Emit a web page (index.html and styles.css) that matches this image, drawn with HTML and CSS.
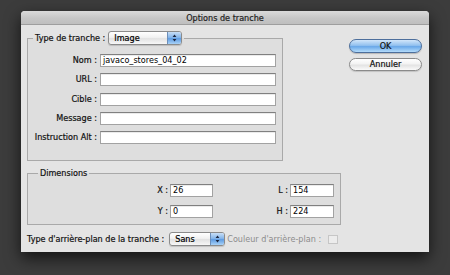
FILE: index.html
```html
<!DOCTYPE html>
<html lang="fr">
<head>
<meta charset="utf-8">
<title>Options de tranche</title>
<link rel="stylesheet" href="styles.css">
</head>
<body>
<div class="dialog">
  <div class="titlebar">Options de tranche</div>
  <div class="content">
    <div class="main">
      <fieldset class="group group-slice">
        <legend class="legend legend-slice">
          <span class="legend-text">Type de tranche :</span>
          <span class="popup popup-image">
            <span class="popup-value">Image</span>
            <span class="popup-arrows"><svg width="13" height="12" viewBox="0 0 13 12"><path d="M4.6 5 L6.5 2.6 L8.4 5 Z M4.6 7 L6.5 9.4 L8.4 7 Z" fill="#1c2740"/></svg></span>
          </span>
        </legend>
        <div class="fields">
          <span class="label">Nom :</span><div class="input">javaco_stores_04_02</div>
          <span class="label">URL :</span><div class="input"></div>
          <span class="label">Cible :</span><div class="input"></div>
          <span class="label">Message :</span><div class="input"></div>
          <span class="label">Instruction Alt :</span><div class="input"></div>
        </div>
      </fieldset>
      <fieldset class="group group-dim">
        <legend class="legend legend-dim">Dimensions</legend>
        <div class="dims">
          <span class="label dim-label">X :</span><div class="input">26</div>
          <span class="label dim-label">L :</span><div class="input">154</div>
          <span class="label dim-label">Y :</span><div class="input">0</div>
          <span class="label dim-label">H :</span><div class="input">224</div>
        </div>
      </fieldset>
      <div class="bgrow">
        <span class="bg-label">Type d'arrière-plan de la tranche :</span>
        <span class="popup popup-sans">
          <span class="popup-value">Sans</span>
          <span class="popup-arrows"><svg width="13" height="12" viewBox="0 0 13 12"><path d="M4.6 5 L6.5 2.6 L8.4 5 Z M4.6 7 L6.5 9.4 L8.4 7 Z" fill="#1c2740"/></svg></span>
        </span>
        <span class="color-label">Couleur d'arrière-plan :</span>
        <span class="swatch"></span>
      </div>
    </div>
    <div class="buttons">
      <div class="btn btn-ok">OK</div>
      <div class="btn btn-cancel">Annuler</div>
    </div>
  </div>
</div>
</body>
</html>
```

FILE: styles.css
```css
html, body {
  margin: 0;
  padding: 0;
}
body {
  width: 450px;
  height: 275px;
  background: #3c3c3c;
  padding: 11px 0 0 21px;
  box-sizing: border-box;
  font-family: "DejaVu Sans", "Noto Sans", sans-serif;
  font-size: 8.1px;
  color: #111;
  overflow: hidden;
}
.dialog {
  width: 408px;
  height: 241px;
  background: #e4e4e4;
  border-radius: 4px 4px 0 0;
  box-shadow: 0 6px 16px rgba(0,0,0,0.7);
  overflow: hidden;
  -webkit-text-stroke: 0.2px currentColor;
}
.titlebar {
  height: 14px;
  line-height: 14px;
  text-align: center;
  color: #1e1e1e;
  background: linear-gradient(#dadada, #c6c6c6 55%, #bfbfbf);
  border-bottom: 1px solid #9e9e9e;
  box-sizing: border-box;
}
.content {
  display: flex;
  padding: 6px 0 0 6px;
}
.main {
  width: 314px;
  display: flex;
  flex-direction: column;
  align-items: flex-start;
}
.group {
  margin: 0;
  border: 1px solid #a9a9a9;
  background: rgba(0,0,0,0.025);
  box-sizing: border-box;
  min-width: 0;
}
.group-slice {
  width: 256px;
  padding: 0 5px 16px 5px;
}
.group-dim {
  width: 314px;
  margin-top: 7px;
  padding: 0 6px 6px 10px;
}
.legend {
  padding: 0 2px;
}
.legend-slice {
  display: flex;
  align-items: center;
  height: 14px;
}
.legend-dim {
  line-height: 10px;
  height: 10px;
}
.fields {
  margin-top: 9px;
  display: grid;
  grid-template-columns: 64px 176px;
  grid-auto-rows: 13px;
  column-gap: 3px;
  row-gap: 6.25px;
}
.label {
  text-align: right;
  line-height: 13px;
  white-space: nowrap;
}
.input {
  height: 13px;
  box-sizing: border-box;
  background: #fff;
  border: 1px solid #a2a2a2;
  border-top-color: #808080;
  box-shadow: inset 0 1px 0 rgba(0,0,0,0.08);
  padding: 0 2px;
  line-height: 11px;
  color: #000;
  white-space: nowrap;
  overflow: hidden;
  -webkit-text-stroke: 0;
}
.dims {
  margin-top: 6px;
  display: grid;
  grid-template-columns: 132px 43px 77px 44px;
  grid-auto-rows: 13px;
  row-gap: 8px;
}
.dim-label {
  padding-right: 2px;
}
.popup {
  display: flex;
  height: 14px;
  box-sizing: border-box;
  border: 1px solid #8b8b8b;
  border-radius: 3px;
  background: linear-gradient(#ffffff, #f1f1f1 45%, #e2e2e2 55%, #f7f7f7);
  box-shadow: 0 1px 1px rgba(0,0,0,0.15);
  overflow: hidden;
}
.popup-image {
  margin-left: 3px;
  width: 74px;
}
.popup-sans {
  margin-left: 5px;
  width: 56px;
}
.popup-value {
  flex: 1;
  padding-left: 5px;
  line-height: 12px;
  color: #000;
}
.popup-arrows {
  width: 13px;
  display: flex;
  align-items: center;
  justify-content: center;
  background: linear-gradient(#c8def6, #86b6ea 45%, #5f9ce2 55%, #a9d2f7);
  border-left: 1px solid #6c8fba;
}
.bgrow {
  margin-top: 7px;
  display: flex;
  align-items: center;
  height: 14px;
}
.bg-label {
  white-space: nowrap;
}
.color-label {
  margin-left: 2px;
  color: #8c8c8c;
  white-space: nowrap;
  -webkit-text-stroke: 0;
}
.swatch {
  margin-left: 7px;
  width: 10px;
  height: 9px;
  box-sizing: border-box;
  border: 1px solid #c6c6c6;
  background: #ececec;
}
.buttons {
  margin-left: 8px;
  margin-top: 8px;
  display: flex;
  flex-direction: column;
  gap: 5px;
}
.btn {
  width: 73px;
  box-sizing: border-box;
  border-radius: 7px;
  text-align: center;
  color: #111;
}
.btn-ok {
  height: 14px;
  line-height: 12px;
  border: 1px solid #4d6f9c;
  background: linear-gradient(#d2e6fa, #93c1ef 45%, #6aa8e9 55%, #b4dcfb);
  box-shadow: 0 1px 1px rgba(0,0,0,0.2);
}
.btn-cancel {
  height: 13px;
  line-height: 11px;
  border: 1px solid #8a8a8a;
  background: linear-gradient(#ffffff, #f3f3f3 45%, #e3e3e3 55%, #fafafa);
  box-shadow: 0 1px 1px rgba(0,0,0,0.15);
}
```
